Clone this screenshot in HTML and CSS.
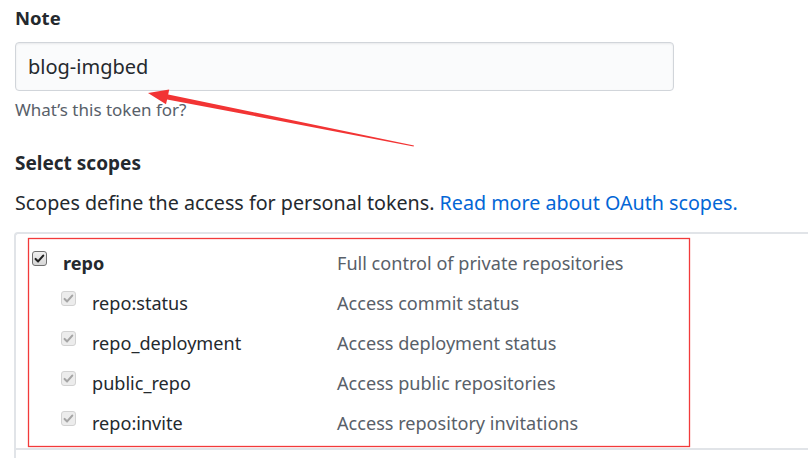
FILE: index.html
```html
<!DOCTYPE html>
<html lang="en">
<head>
<meta charset="utf-8">
<title>New personal access token</title>
<link rel="stylesheet" href="styles.css">
</head>
<body>
<main class="page">
  <div class="field">
    <label class="field-label" for="note">Note</label>
    <input class="field-input" id="note" type="text" value="blog-imgbed">
    <p class="field-note">What’s this token for?</p>
  </div>

  <section class="scopes">
    <h2 class="scopes-title">Select scopes</h2>
    <p class="scopes-intro">Scopes define the access for personal tokens. <a class="link" href="#">Read more about OAuth scopes.</a></p>

    <div class="scope-table">
      <div class="scope-group">
        <div class="scope-row">
          <div class="scope-name parent">
            <span class="check check-on"><svg viewBox="0 0 16 16"><path d="M3.2 8.6 L6.3 11.6 L12.6 4.4" /></svg></span>
            <span class="name-text bold">repo</span>
          </div>
          <div class="scope-desc">Full control of private repositories</div>
        </div>
        <div class="scope-row">
          <div class="scope-name child">
            <span class="check check-off"><svg viewBox="0 0 16 16"><path d="M3.2 8.6 L6.3 11.6 L12.6 4.4" /></svg></span>
            <span class="name-text">repo:status</span>
          </div>
          <div class="scope-desc">Access commit status</div>
        </div>
        <div class="scope-row">
          <div class="scope-name child">
            <span class="check check-off"><svg viewBox="0 0 16 16"><path d="M3.2 8.6 L6.3 11.6 L12.6 4.4" /></svg></span>
            <span class="name-text">repo_deployment</span>
          </div>
          <div class="scope-desc">Access deployment status</div>
        </div>
        <div class="scope-row">
          <div class="scope-name child">
            <span class="check check-off"><svg viewBox="0 0 16 16"><path d="M3.2 8.6 L6.3 11.6 L12.6 4.4" /></svg></span>
            <span class="name-text">public_repo</span>
          </div>
          <div class="scope-desc">Access public repositories</div>
        </div>
        <div class="scope-row">
          <div class="scope-name child">
            <span class="check check-off"><svg viewBox="0 0 16 16"><path d="M3.2 8.6 L6.3 11.6 L12.6 4.4" /></svg></span>
            <span class="name-text">repo:invite</span>
          </div>
          <div class="scope-desc">Access repository invitations</div>
        </div>
      </div>
      <div class="scope-group next"></div>
    </div>
  </section>
</main>

<svg class="annotations" width="808" height="458" viewBox="0 0 808 458" aria-hidden="true">
  <rect x="28.5" y="238.5" width="661" height="208" fill="none" stroke="#f23a3a" stroke-width="1.3"/>
  <polygon fill="#f23434" points="148,93 169.2,89.6 168.2,94.4 414,145.6 413.6,146.4 167.1,99.4 166.0,104.2"/>
</svg>
</body>
</html>
```

FILE: styles.css
```css
* {
  box-sizing: border-box;
}

html, body {
  margin: 0;
  padding: 0;
  background: #ffffff;
}

body {
  position: relative;
  width: 808px;
  height: 458px;
  overflow: hidden;
  font-family: "Noto Sans", "Open Sans", sans-serif;
  color: #24292e;
}

.page {
  padding: 5px 0 0 15px;
}

.field {
  display: flex;
  flex-direction: column;
  align-items: flex-start;
}

.field-label {
  font-size: 18.5px;
  font-weight: 700;
  line-height: 26px;
}

.field-input {
  margin-top: 11px;
  width: 659px;
  height: 49px;
  padding: 0 12px;
  font-family: inherit;
  font-size: 20px;
  color: #24292e;
  background: #fafbfc;
  border: 1.5px solid #d1d5da;
  border-radius: 4px;
  box-shadow: inset 0 1px 2px rgba(27, 31, 35, 0.075);
  outline: none;
}

.field-note {
  margin: 7px 0 0;
  font-size: 17px;
  line-height: 24px;
  color: #586069;
}

.scopes-title {
  margin: 27px 0 0;
  font-size: 19px;
  font-weight: 700;
  line-height: 28px;
}

.scopes-intro {
  margin: 12px 0 0;
  font-size: 19.7px;
  line-height: 28px;
  white-space: nowrap;
}

.link {
  color: #0366d6;
  text-decoration: none;
}

.scope-table {
  margin: 15px 0 0 -1px;
  border-top: 2px solid #e1e4e8;
  border-left: 2px solid #e1e4e8;
  border-top-left-radius: 4px;
}

.scope-group {
  padding: 9px 0 5px;
}

.scope-group.next {
  border-top: 2px solid #e1e4e8;
  padding: 0;
  height: 20px;
}

.scope-row {
  display: grid;
  grid-template-columns: 321px 1fr;
  height: 40px;
  font-size: 18.1px;
  line-height: 40px;
  white-space: nowrap;
}

.scope-name {
  display: flex;
  align-items: flex-start;
  gap: 16px;
}

.scope-name.parent {
  padding-left: 16px;
}

.scope-name.child {
  padding-left: 45px;
}

.name-text.bold {
  font-weight: 700;
}

.scope-desc {
  color: #586069;
}

.check {
  flex: none;
  display: flex;
  align-items: center;
  justify-content: center;
  width: 15px;
  height: 15px;
  margin-top: 8px;
  border-radius: 3px;
}

.check svg {
  width: 13px;
  height: 13px;
  fill: none;
  stroke-width: 2.6;
  stroke-linecap: round;
  stroke-linejoin: round;
}

.check-on {
  background: linear-gradient(#f0f0f0, #d6d6d6);
  border: 1px solid #707070;
}

.check-on svg {
  stroke: #222222;
}

.check-off {
  background: #ececec;
  border: 1px solid #d2d2d2;
}

.check-off svg {
  stroke: #a5a5a5;
}

.annotations {
  position: absolute;
  top: 0;
  left: 0;
  pointer-events: none;
}
```
